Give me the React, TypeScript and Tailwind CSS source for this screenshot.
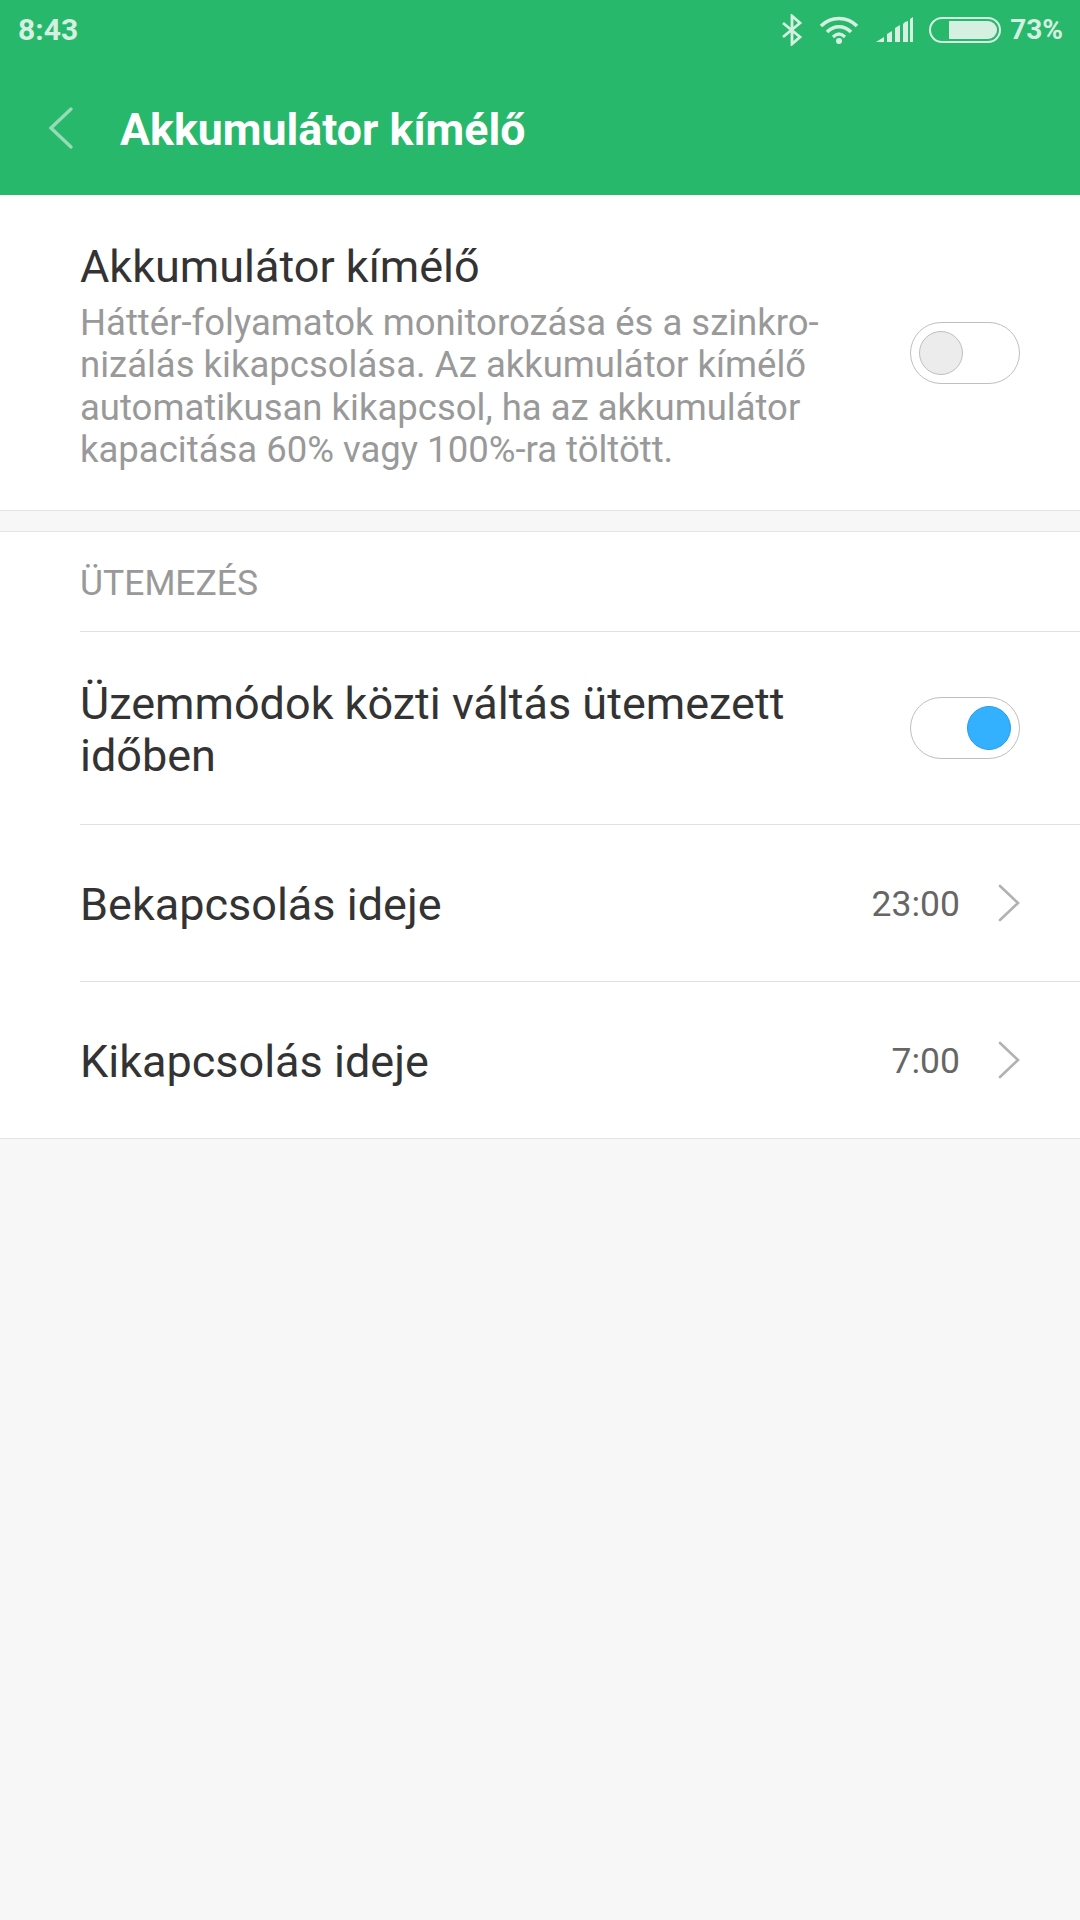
const font = { fontFamily: "Roboto, sans-serif" }

function Toggle({ on }: { on?: boolean }) {
  return (
    <div className={`flex h-[62px] w-[110px] shrink-0 items-center rounded-full border border-[#bfbfbf] bg-white px-[8px] ${on ? "justify-end" : "justify-start"}`}>
      {on ? (
        <div className="size-[44px] rounded-full border border-[#2a9be8] bg-[#33b1ff]" />
      ) : (
        <div className="size-[44px] rounded-full border border-[#bfbfbf] bg-[#ececec]" />
      )}
    </div>
  )
}

function Chevron() {
  return (
    <svg width="22" height="38" viewBox="0 0 22 38" className="ml-[38px] shrink-0">
      <path d="M2 2 L20 19 L2 36" fill="none" stroke="#b2b2b2" strokeWidth="2.6" strokeLinecap="round" />
    </svg>
  )
}

function StatusBar() {
  return (
    <div className="flex h-[60px] items-center justify-between pl-[18px] pr-[17px] text-[#d5f0e1]">
      <span className="text-[30px] font-bold leading-none">8:43</span>
      <div className="flex items-center">
        <svg width="22" height="32" viewBox="0 0 22 32" className="mr-[16px]">
          <path d="M2 9 L19 23 L11 30 L11 2 L19 9 L2 23" fill="none" stroke="#d5f0e1" strokeWidth="2.8" />
        </svg>
        <svg width="40" height="28" viewBox="0 0 40 28" className="mr-[17px]">
          <path d="M2 10 C12 0 28 0 38 10" fill="none" stroke="#d5f0e1" strokeWidth="3.6" />
          <path d="M8 16 C15 9 25 9 32 16" fill="none" stroke="#d5f0e1" strokeWidth="3.6" />
          <path d="M14 21 C18 17 22 17 26 21" fill="none" stroke="#d5f0e1" strokeWidth="3.2" />
          <circle cx="20" cy="25" r="3" fill="#d5f0e1" />
        </svg>
        <svg width="38" height="26" viewBox="0 0 38 26" className="mr-[15px]">
          <path d="M0 25 L8 20 L8 25 Z M11 25 V17 L16 14 V25 Z M19 25 V11 L24 8 V25 Z M27 25 V7 L29 5 L32 4 V25 Z M34 25 V2 L37 0 V25 Z" fill="#d5f0e1" />
        </svg>
        <div className="mr-[9px] flex h-[26px] w-[72px] items-center justify-end rounded-full border-2 border-[#d5f0e1] p-[2px]">
          <div className="h-full w-[48px] rounded-r-full bg-[#d5f0e1]" />
        </div>
        <span className="text-[28px] font-bold leading-none">73%</span>
      </div>
    </div>
  )
}

function ValueRow({ label, value, last }: { label: string; value: string; last?: boolean }) {
  return (
    <div className="pl-[80px]">
      <div className={`flex items-center pr-[60px] ${last ? "h-[156px]" : "h-[157px] border-b border-[#e0e0e0]"}`}>
        <span className="flex-1 pt-[3px] text-[45px] leading-none text-[#333333]">{label}</span>
        <span className="pt-[3px] text-[35.5px] leading-none text-[#666666]">{value}</span>
        <Chevron />
      </div>
    </div>
  )
}

export default function App() {
  return (
    <div style={font} className="flex min-h-[1920px] w-[1080px] flex-col bg-[#f7f7f7]">
      <div className="h-[195px] bg-[#28b86b]">
        <StatusBar />
        <div className="flex h-[135px] items-center pl-[48px]">
          <svg width="26" height="44" viewBox="0 0 26 44">
            <path d="M23 3 L3 22 L23 41" fill="none" stroke="#94dcb5" strokeWidth="3.4" strokeLinecap="round" />
          </svg>
          <h1 className="ml-[46px] pt-[5px] text-[44.7px] font-bold leading-none text-white">Akkumulátor kímélő</h1>
        </div>
      </div>

      <div className="flex h-[316px] items-center border-b border-[#e3e3e3] bg-white pl-[80px] pr-[60px]">
        <div className="flex-1 pt-[8px]">
          <div className="text-[45px] leading-[50px] text-[#333333]">Akkumulátor kímélő</div>
          <p className="mt-[10px] text-[36.5px] leading-[42.4px] text-[#999999]">
            Háttér-folyamatok monitorozása és a szinkro-
            <br />
            nizálás kikapcsolása. Az akkumulátor kímélő
            <br />
            automatikusan kikapcsol, ha az akkumulátor
            <br />
            kapacitása 60% vagy 100%-ra töltött.
          </p>
        </div>
        <Toggle />
      </div>

      <div className="mt-[20px] border-y border-[#e3e3e3] bg-white">
        <div className="pl-[80px]">
          <div className="flex h-[100px] items-center border-b border-[#e0e0e0] pt-[5px] text-[35.5px] text-[#999999]">ÜTEMEZÉS</div>
        </div>
        <div className="pl-[80px]">
          <div className="flex h-[193px] items-center border-b border-[#e0e0e0] pr-[60px]">
            <div className="flex-1 pt-[4px] text-[45px] leading-[52px] text-[#333333]">
              Üzemmódok közti váltás ütemezett
              <br />
              időben
            </div>
            <Toggle on />
          </div>
        </div>
        <ValueRow label="Bekapcsolás ideje" value="23:00" />
        <ValueRow label="Kikapcsolás ideje" value="7:00" last />
      </div>
    </div>
  )
}
